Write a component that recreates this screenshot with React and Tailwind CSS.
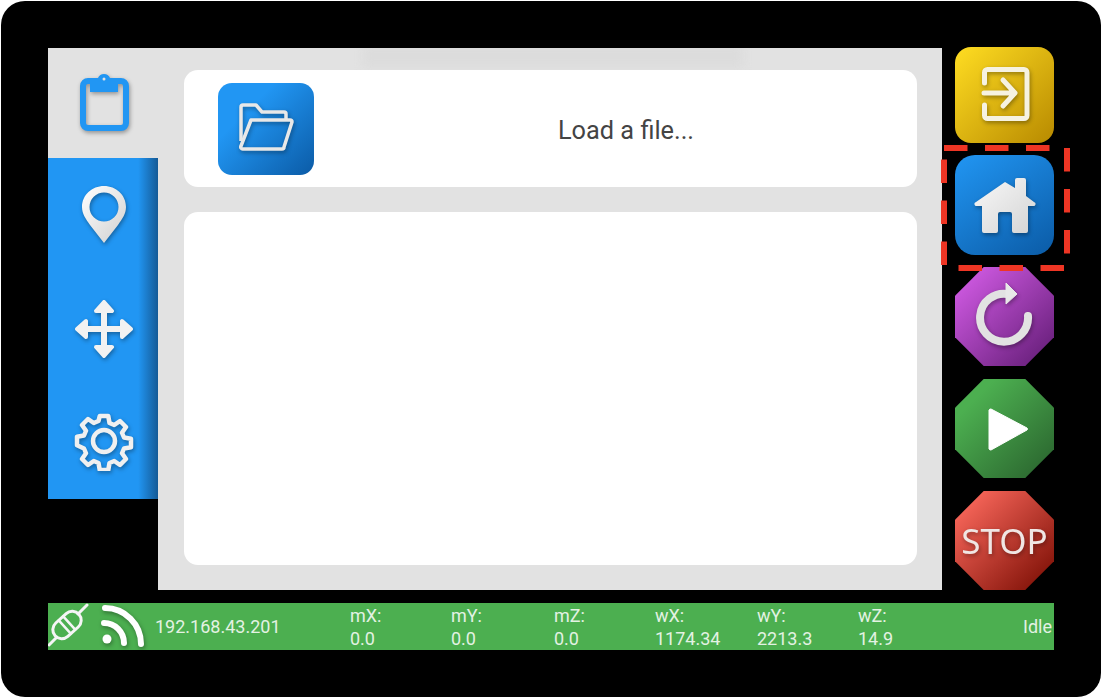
const Btn = ({ className, children }) => (
  <div className={`w-[99px] shrink-0 flex items-center justify-center ${className}`}>{children}</div>
);
const oct = "[clip-path:polygon(29%_0,71%_0,100%_29%,100%_71%,71%_100%,29%_100%,0_71%,0_29%)]";
const shadow = "drop-shadow-[1px_2px_2px_rgba(0,0,0,0.35)]";
const Field = ({ label, value, className }) => (
  <div className={`flex flex-col leading-[23px] text-[18px] ${className}`}>
    <span>{label}</span>
    <span>{value}</span>
  </div>
);
export default function App() {
  return (
    <div className="w-[1102px] h-[698px] bg-white p-px relative font-['Roboto',sans-serif] overflow-hidden">
      <div className="w-[1100px] h-[696px] rounded-[24px] bg-black pl-[47px] pt-[46px] flex flex-col">
        <div className="flex h-[544px]">
          <div className="w-[110px] h-[451px] mt-px flex flex-col">
            <div className="h-[110px] bg-[#e2e2e2] pt-[24px] pl-[32px]">
              <svg width="50" height="60" viewBox="0 0 50 60" className={shadow} fill="none">
                <rect x="3" y="9" width="43" height="47" rx="5" stroke="#2196f3" strokeWidth="6" />
                <path d="M10 6h8a6.500 6.500 0 0 1 12 0h8v14H10z" fill="#2196f3" />
                <circle cx="24" cy="7" r="1.500" fill="#e2e2e2" />
              </svg>
            </div>
            <div className="h-[341px] bg-[linear-gradient(90deg,#2196f3_0%,#2196f3_82%,#155a96_100%)] flex flex-col items-center">
              <svg width="46" height="58" viewBox="0 0 46 58" className={`mt-[28px] ml-[2px] ${shadow}`}>
                <defs>
                  <linearGradient id="pg" x1="0" y1="0" x2="1" y2="1"><stop offset="0" stopColor="#fff" /><stop offset="1" stopColor="#d0d0d0" /></linearGradient>
                </defs>
                <path fillRule="evenodd" fill="url(#pg)" d="M23 0C11 0 1 9 1 21c0 7 4 12 8 18l14 18 14-18c4-6 8-11 8-18C45 9 35 0 23 0zm0 6.500a14.500 14.500 0 1 1 0 29 14.500 14.500 0 0 1 0-29z" />
              </svg>
              <svg width="60" height="60" viewBox="0 0 60 60" className={`mt-[55px] ml-[2px] ${shadow}`} fill="#f2f2f2" stroke="#f2f2f2" strokeLinejoin="round">
                <path d="M30 6v48M6 30h48" strokeWidth="6" fill="none" />
                <path d="M30 3l8 9H22z" strokeWidth="4" />
                <path d="M30 57l8-9H22z" strokeWidth="4" />
                <path d="M3 30l9-8v16z" strokeWidth="4" />
                <path d="M57 30l-9-8v16z" strokeWidth="4" />
              </svg>
              <svg width="60" height="60" viewBox="0 0 24 24" className={`mt-[52px] ml-[2px] ${shadow}`} fill="none" stroke="#f0f0f0" strokeWidth="1.800" strokeLinejoin="round">
                <path d="M10.300 2h3.400l.5 2.800 1.900.8 2.300-1.600 2.400 2.400-1.600 2.300.8 1.900 2.800.5v3.400l-2.800.5-.8 1.900 1.600 2.300-2.400 2.400-2.300-1.600-1.900.8-.5 2.800h-3.400l-.5-2.800-1.900-.8-2.300 1.600-2.400-2.400 1.600-2.300-.8-1.900L1.200 13.700v-3.400l2.800-.5.8-1.900L3.200 5.600l2.400-2.400 2.300 1.600 1.900-.8z" />
                <circle cx="12" cy="12" r="4.400" />
              </svg>
            </div>
          </div>
          <div className="w-[784px] h-[542px] mt-px bg-[#e2e2e2] pl-[26px] pr-[25px] pt-[22px] flex flex-col relative overflow-hidden">
            <div className="absolute left-[205px] top-[-4px] w-[380px] h-[24px] bg-[#dcdcdc] blur-[5px]" />
            <div className="relative h-[117px] bg-white rounded-[14px] flex items-center pl-[34px] shrink-0">
              <div className="w-[96px] h-[92px] rounded-[14px] bg-[linear-gradient(135deg,#2196f3_30%,#0b5ba6_100%)] flex items-center justify-center">
                <svg width="56" height="48" viewBox="0 0 56 48" fill="none" stroke="#e8e8e8" strokeWidth="3.500" strokeLinejoin="round" className={`ml-[2px] mb-[4px] ${shadow}`}>
                  <path d="M2 38V4a2 2 0 0 1 2-2h13l6 7h22a2 2 0 0 1 2 2v6" />
                  <path d="M2 43l10-26h39a2 2 0 0 1 2 2l-8 25a2 2 0 0 1-2 2H4a2 2 0 0 1-2-3z" />
                </svg>
              </div>
              <div className="ml-[244px] mt-[4px] text-[25.300px] leading-none text-[#444444]">Load a file...</div>
            </div>
            <div className="relative mt-[25px] h-[353px] bg-white rounded-[14px]" />
          </div>
          <div className="ml-[13px] flex flex-col gap-[12px]">
            <Btn className="h-[96px] rounded-[16px] bg-[linear-gradient(135deg,#ffdd22_0%,#b88a00_100%)]">
              <svg width="99" height="96" viewBox="0 0 99 96" fill="none" stroke="#f6f2e0" strokeWidth="5" strokeLinecap="round" strokeLinejoin="round" className={shadow}>
                <path d="M29.500 36V25.500a3 3 0 0 1 3-3H69a3 3 0 0 1 3 3v43a3 3 0 0 1-3 3H32.500a3 3 0 0 1-3-3V58" />
                <path d="M29 46h29M48 33l12 13-12 13" />
              </svg>
            </Btn>
            <Btn className="h-[100px] rounded-[20px] bg-[linear-gradient(145deg,#2196f3_0%,#0b5ba6_100%)]">
              <svg width="99" height="100" viewBox="0 0 99 100" className={shadow}>
                <defs>
                  <linearGradient id="hg" x1="0" y1="0" x2="1" y2="1"><stop offset="0" stopColor="#f8f8f8" /><stop offset="1" stopColor="#d4d4d4" /></linearGradient>
                </defs>
                <path fill="url(#hg)" d="M50 27l10 6v-8a2 2 0 0 1 2-2h7a2 2 0 0 1 2 2v16l8 6a2 2 0 0 1-1 4h-5v25a2 2 0 0 1-2 2H59a2 2 0 0 1-2-2V59a2 2 0 0 0-2-2H45a2 2 0 0 0-2 2v17a2 2 0 0 1-2 2H29a2 2 0 0 1-2-2V51h-5a2 2 0 0 1-1-4z" />
              </svg>
            </Btn>
            <Btn className={`h-[99px] ${oct} bg-[linear-gradient(135deg,#d35ce6_5%,#5f1a72_100%)]`}>
              <svg width="99" height="99" viewBox="0 0 99 99" fill="none" className={shadow}>
                <path d="M53 27A24 24 0 1 0 73 49" stroke="#e2e2e2" strokeWidth="8" strokeLinecap="round" />
                <path d="M51 16l11 11-11 10z" fill="#e8e8e8" stroke="#e8e8e8" strokeWidth="1" strokeLinejoin="round" />
              </svg>
            </Btn>
            <Btn className={`h-[99px] mt-px ${oct} bg-[linear-gradient(135deg,#4caf50_20%,#28602c_100%)]`}>
              <svg width="99" height="99" viewBox="0 0 99 99">
                <path d="M36 30l36 19a1.500 1.500 0 0 1 0 2L36 71a2 2 0 0 1-2-1V31a2 2 0 0 1 2-1z" fill="#ffffff" stroke="#ffffff" strokeWidth="1" strokeLinejoin="round" />
              </svg>
            </Btn>
            <Btn className={`h-[99px] mt-px ${oct} bg-[linear-gradient(135deg,#f8665a_10%,#760a00_100%)]`}>
              <span className={`text-[35px] leading-none text-[#f0e6e4] font-['Noto_Sans',sans-serif] ${shadow}`}>STOP</span>
            </Btn>
          </div>
        </div>
        <div className="mt-[12px] w-[1006px] h-[47px] bg-[#4caf50] text-[#e3f2e3] flex items-center">
          <svg width="46" height="47" viewBox="0 0 46 47" fill="none" stroke="#f5f5f5" strokeWidth="3" strokeLinecap="round" className="shrink-0">
            <path d="M1 42l7-7M30 11l9-9" />
            <g transform="rotate(-42 19 22)">
              <rect x="3" y="13" width="32" height="18" rx="9" />
              <path d="M16 13v18M22 13v18" strokeWidth="2.500" />
            </g>
          </svg>
          <svg width="46" height="47" viewBox="0 0 46 47" className={`shrink-0 ml-[5px] ${shadow}`} fill="none" stroke="#ffffff" strokeLinecap="round">
            <circle cx="8" cy="36" r="4.500" fill="#ffffff" stroke="none" />
            <path d="M5 20a20 20 0 0 1 20 20" strokeWidth="6" />
            <path d="M6 5a36 36 0 0 1 36 36" strokeWidth="6" />
          </svg>
          <div className="ml-[10px] w-[195px] text-[18px] leading-none shrink-0">192.168.43.201</div>
          <Field label="mX:" value="0.0" className="w-[101px] shrink-0" />
          <Field label="mY:" value="0.0" className="w-[103px] shrink-0" />
          <Field label="mZ:" value="0.0" className="w-[101px] shrink-0" />
          <Field label="wX:" value="1174.34" className="w-[102px] shrink-0" />
          <Field label="wY:" value="2213.3" className="w-[101px] shrink-0" />
          <Field label="wZ:" value="14.9" className="w-[80px] shrink-0" />
          <div className="ml-auto mr-[2px] text-[18px] leading-none">Idle</div>
        </div>
      </div>
      <svg width="1102" height="698" className="absolute left-0 top-0 pointer-events-none" fill="none">
        <rect x="944" y="148" width="123" height="120" stroke="#ee3524" strokeWidth="6" strokeDasharray="23.500 17.500" />
      </svg>
    </div>
  );
}
